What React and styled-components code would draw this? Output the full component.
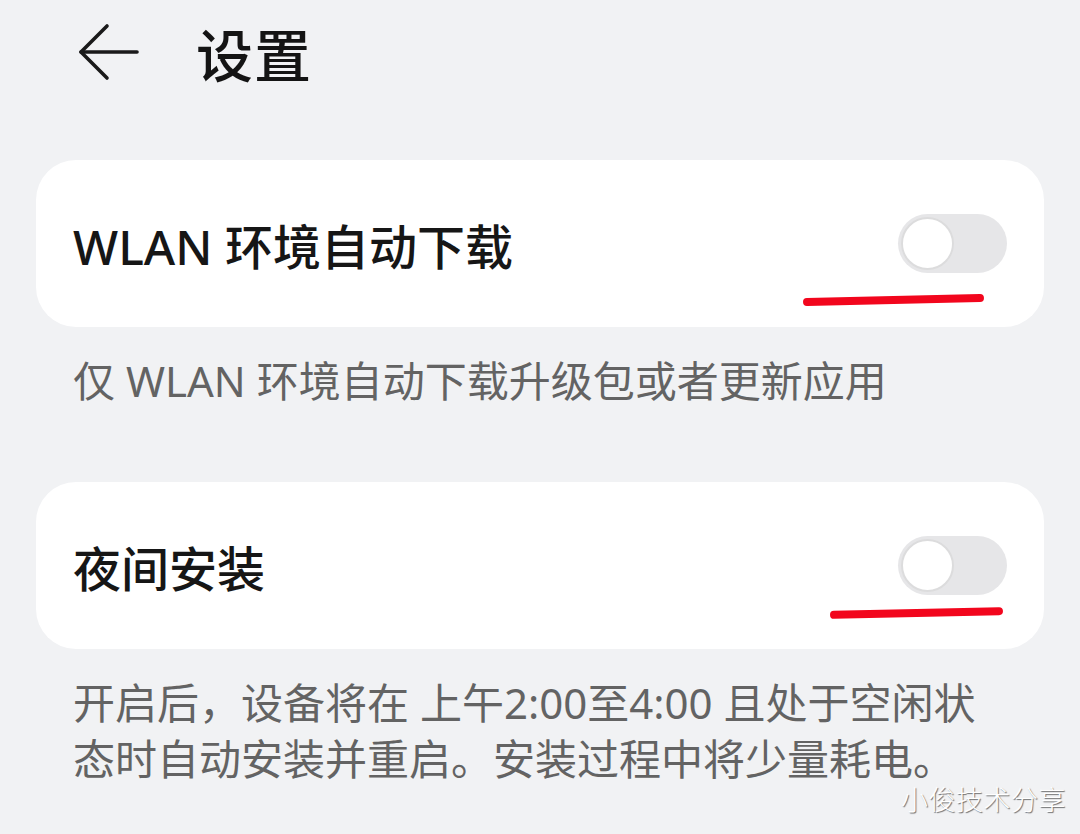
import styled, { createGlobalStyle } from "styled-components";

const GlobalStyle = createGlobalStyle`
  html, body {
    margin: 0;
    padding: 0;
    background: #f1f2f4;
  }
  body {
    font-family: "Noto Sans", "Noto Sans CJK SC", sans-serif;
    color: #1a1a1a;
  }
`;

const Page = styled.div`
  position: relative;
  width: 1080px;
  height: 834px;
  overflow: hidden;
  background: #f1f2f4;
  padding: 0 36px;
  box-sizing: border-box;
`;

const Header = styled.div`
  display: flex;
  align-items: center;
  height: 104px;
  margin-bottom: 56px;
  padding-left: 42px;
  gap: 56px;
`;

const BackIcon = styled.svg`
  width: 62px;
  height: 58px;
  flex-shrink: 0;
`;

const Title = styled.h1`
  margin: 0;
  font-size: 57px;
  font-weight: 500;
  letter-spacing: 1px;
  color: #141414;
`;

const Group = styled.section`
  margin-bottom: 73px;
`;

const Card = styled.div`
  position: relative;
  display: flex;
  align-items: center;
  justify-content: space-between;
  height: 167px;
  padding: 0 37px;
  background: #ffffff;
  border-radius: 40px;
  box-sizing: border-box;
`;

const Label = styled.span`
  font-size: 48px;
  font-weight: 500;
  color: #161616;
`;

const Switch = styled.div`
  position: relative;
  width: 109px;
  height: 59px;
  border-radius: 30px;
  background: #e6e6e8;
  flex-shrink: 0;

  &::after {
    content: "";
    position: absolute;
    left: 3px;
    top: 3px;
    width: 49px;
    height: 49px;
    border-radius: 50%;
    background: #ffffff;
    border: 2px solid #dcdcdd;
  }
`;

const Mark = styled.div`
  position: absolute;
  height: 8px;
  border-radius: 4px;
  background: #f2061d;
  transform: rotate(-1.3deg);
  left: ${(p) => p.$left}px;
  top: ${(p) => p.$top}px;
  width: ${(p) => p.$width}px;
`;

const Desc = styled.p`
  margin: 0;
  padding: 26px 37px 0;
  font-size: 42px;
  line-height: 56px;
  color: #636363;
`;

const Watermark = styled.div`
  position: absolute;
  right: 14px;
  bottom: 16px;
  font-size: 27px;
  font-weight: 300;
  letter-spacing: 0.5px;
  color: #ffffff;
  text-shadow: 1px 1px 1px rgba(0, 0, 0, 0.55);
`;

const Setting = ({ label, desc, mark }) => (
  <Group>
    <Card>
      <Label>{label}</Label>
      <Switch />
      <Mark $left={mark.left} $top={mark.top} $width={mark.width} />
    </Card>
    <Desc>{desc}</Desc>
  </Group>
);

const App = () => {
  return (
    <Page>
      <GlobalStyle />
      <Header>
        <BackIcon viewBox="0 0 62 58" fill="none" stroke="#1a1a1a" strokeWidth="3.6" strokeLinecap="round" strokeLinejoin="round">
          <path d="M3 29 H59" />
          <path d="M29 3 L3 29 L29 55" />
        </BackIcon>
        <Title>设置</Title>
      </Header>
      <Setting
        label="WLAN 环境自动下载"
        desc="仅 WLAN 环境自动下载升级包或者更新应用"
        mark={{ left: 767, top: 136, width: 181 }}
      />
      <Setting
        label="夜间安装"
        desc={<>开启后，设备将在 上午2:00至4:00 且处于空闲状<br />态时自动安装并重启。安装过程中将少量耗电。</>}
        mark={{ left: 794, top: 127, width: 173 }}
      />
      <Watermark>小俊技术分享</Watermark>
    </Page>
  );
};

export default App;
